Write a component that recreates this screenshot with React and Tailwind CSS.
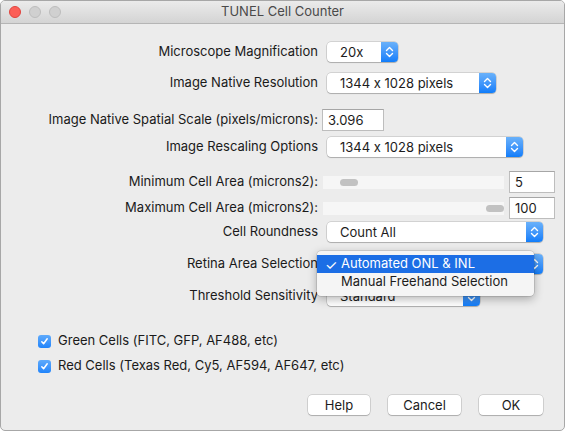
import React from 'react';

const font = { fontFamily: 'Inter, "Liberation Sans", sans-serif', fontFeatureSettings: '"calt" 0' };

const Chevrons = () => (
  <svg width="17" height="20" viewBox="0 0 17 20" fill="none">
    <path d="M5.5 8.5 L8.5 5.5 L11.5 8.5" stroke="white" strokeWidth="1.4" strokeLinecap="round" strokeLinejoin="round" />
    <path d="M5.5 11.5 L8.5 14.5 L11.5 11.5" stroke="white" strokeWidth="1.4" strokeLinecap="round" strokeLinejoin="round" />
  </svg>
);

const Popup = ({ width, value }) => (
  <div
    className="ml-[9px] h-[20px] flex rounded-[4px] bg-white shadow-[0_0_0_0.5px_rgba(0,0,0,0.22),0_1px_1px_rgba(0,0,0,0.18)]"
    style={{ width }}
  >
    <div className="flex-1 pl-[13px] leading-[20px] text-[13px] text-[#1c1c1c] truncate">{value}</div>
    <div className="w-[17px] h-[20px] rounded-r-[4px] bg-linear-to-b from-[#69b1fa] to-[#0d7dfa]">
      <Chevrons />
    </div>
  </div>
);

const Field = ({ width, value, ml }) => (
  <div
    className={`h-[22px] bg-white border border-[#bdbdbd] border-t-[#a6a6a6] pl-[5px] leading-[20px] text-[13px] text-[#1c1c1c] ${ml}`}
    style={{ width }}
  >
    {value}
  </div>
);

const Label = ({ children }) => (
  <div className="w-[317px] shrink-0 text-right text-[13px] text-[#1a1a1a] whitespace-nowrap">{children}</div>
);

const Slider = ({ atEnd, value }) => (
  <>
    <div className={`ml-[5px] w-[181px] h-[13px] bg-[#f6f6f6] flex items-center ${atEnd ? 'justify-end' : 'pl-[17px]'}`}>
      <div className="w-[18px] h-[7px] rounded-full bg-[#c2c2c2]" />
    </div>
    <Field width="46px" value={value} ml="ml-[5px]" />
  </>
);

const Check = ({ label, mt }) => (
  <div className={`h-[22px] flex items-center pl-[37px] ${mt}`}>
    <div className="w-[13px] h-[13px] rounded-[3px] bg-linear-to-b from-[#5eaafb] to-[#1e84fb] flex items-center justify-center">
      <svg width="9" height="9" viewBox="0 0 9 9" fill="none">
        <path d="M1.8 4.8 L3.6 6.8 L7.2 1.8" stroke="white" strokeWidth="1.5" strokeLinecap="round" strokeLinejoin="round" />
      </svg>
    </div>
    <span className="ml-[7px] text-[13px] text-[#1a1a1a]">{label}</span>
  </div>
);

const Button = ({ children, width }) => (
  <div
    className="h-[20px] rounded-[4px] bg-white text-center leading-[20px] text-[13px] text-[#1c1c1c] shadow-[0_0_0_0.5px_rgba(0,0,0,0.22),0_1px_1px_rgba(0,0,0,0.18)]"
    style={{ width }}
  >
    {children}
  </div>
);

export default function App() {
  return (
    <div className="w-[566px] h-[432px] bg-white" style={font}>
      <div className="relative w-[565px] h-[431px] border border-[#a7a7a7] rounded-[5px] bg-[#ececec] overflow-hidden flex flex-col">
        {/* title bar */}
        <div className="h-[23px] shrink-0 grid grid-cols-[1fr_auto_1fr] items-center bg-linear-to-b from-[#ebebeb] to-[#d4d4d4] border-b border-[#b5b5b5]">
          <div className="flex items-center gap-[8px] pl-[8px]">
            <div className="w-[12px] h-[12px] rounded-full bg-[#fc5f57] border border-[#e0443e]" />
            <div className="w-[12px] h-[12px] rounded-full bg-[#d0d0d0] border border-[#bdbdbd]" />
            <div className="w-[12px] h-[12px] rounded-full bg-[#d0d0d0] border border-[#bdbdbd]" />
          </div>
          <div className="text-[13px] text-[#4a4a4a]">TUNEL Cell Counter</div>
          <div />
        </div>

        <div className="h-[22px] mt-[17px] flex items-center">
          <Label>Microscope Magnification</Label>
          <Popup width="71px" value="20x" />
        </div>
        <div className="h-[22px] mt-[9px] flex items-center">
          <Label>Image Native Resolution</Label>
          <Popup width="169px" value="1344 x 1028 pixels" />
        </div>
        <div className="h-[22px] mt-[15px] flex items-center">
          <Label>Image Native Spatial Scale (pixels/microns):</Label>
          <Field width="62px" value="3.096" ml="ml-[4px]" />
        </div>
        <div className="h-[22px] mt-[5px] flex items-center">
          <Label>Image Rescaling Options</Label>
          <Popup width="196px" value="1344 x 1028 pixels" />
        </div>
        <div className="h-[22px] mt-[13px] flex items-center">
          <Label>Minimum Cell Area (microns2):</Label>
          <Slider value="5" />
        </div>
        <div className="h-[22px] mt-[4px] flex items-center">
          <Label>Maximum Cell Area (microns2):</Label>
          <Slider atEnd value="100" />
        </div>
        <div className="h-[22px] mt-[2px] flex items-center">
          <Label>Cell Roundness</Label>
          <Popup width="216px" value="Count All" />
        </div>
        <div className="h-[22px] mt-[10px] flex items-center">
          <Label>Retina Area Selection</Label>
          <Popup width="216px" value="Automated ONL & INL" />
        </div>
        <div className="h-[22px] mt-[10px] flex items-center">
          <Label>Threshold Sensitivity</Label>
          <Popup width="153px" value="Standard" />
        </div>

        <Check mt="mt-[23px]" label="Green Cells (FITC, GFP, AF488, etc)" />
        <Check mt="mt-[3px]" label="Red Cells (Texas Red, Cy5, AF594, AF647, etc)" />

        <div className="mt-[18px] flex justify-end gap-[18px] pr-[21px]">
          <Button width="62px">Help</Button>
          <Button width="73px">Cancel</Button>
          <Button width="64px">OK</Button>
        </div>

        {/* open popup menu */}
        <div className="absolute left-[316px] top-[250px] w-[217px] h-[45px] py-[4px] rounded-[4px] bg-[#f5f5f5] shadow-[0_0_0_0.5px_rgba(0,0,0,0.2),0_3px_10px_rgba(0,0,0,0.3)] text-[13px]">
          <div className="h-[18px] flex items-center bg-[#1c6ee5] text-white">
            <span className="w-[24px] pl-[8px] text-[14px]">✓</span>
            <span>Automated ONL &amp; INL</span>
          </div>
          <div className="h-[18px] flex items-center text-[#1c1c1c]">
            <span className="w-[24px]" />
            <span>Manual Freehand Selection</span>
          </div>
        </div>
      </div>
    </div>
  );
}
